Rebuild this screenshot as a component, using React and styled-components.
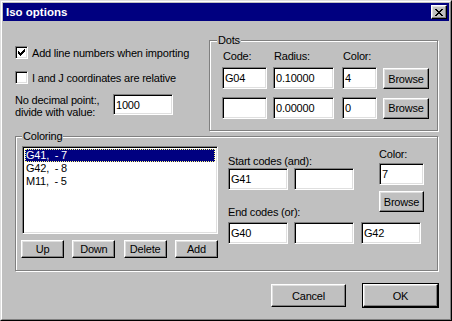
import styled, { createGlobalStyle } from 'styled-components'

const GlobalStyle = createGlobalStyle`
  html, body {
    margin: 0;
    padding: 0;
    background: #c0c0c0;
  }
  body {
    font-family: "Liberation Sans", Arial, sans-serif;
    font-size: 11px;
    letter-spacing: -0.2px;
    color: #000;
  }
`

const Window = styled.div`
  width: 452px;
  height: 321px;
  box-sizing: border-box;
  border: 1px solid;
  border-color: #dfdfdf #000 #000 #dfdfdf;
  background: #c0c0c0;
`

const Frame = styled.div`
  height: 100%;
  box-sizing: border-box;
  border: 1px solid;
  border-color: #fff #808080 #808080 #fff;
  padding: 1px;
  display: flex;
  flex-direction: column;
`

const TitleBar = styled.div`
  height: 18px;
  flex: none;
  background: #000080;
  color: #fff;
  display: flex;
  align-items: center;
  justify-content: space-between;
  padding: 0 2px 0 3px;
  font-weight: bold;
  font-size: 11.5px;
  letter-spacing: 0;
`

const CloseButton = styled.div`
  width: 16px;
  height: 14px;
  box-sizing: border-box;
  background: #c0c0c0;
  border: 1px solid;
  border-color: #fff #000 #000 #fff;
  box-shadow: inset -1px -1px 0 #808080, inset 1px 1px 0 #dfdfdf;
  display: flex;
  align-items: center;
  justify-content: center;
`

const Body = styled.div`
  padding: 13px 11px 0 12px;
  display: flex;
  flex-direction: column;
`

const TopSection = styled.div`
  display: grid;
  grid-template-columns: 194px 229px;
`

const LeftColumn = styled.div`
  padding-top: 12px;
  display: flex;
  flex-direction: column;
`

const CheckRow = styled.label`
  display: flex;
  align-items: center;
  gap: 4px;
  height: 13px;
  margin-top: ${({ $gap }) => $gap || 0}px;
  white-space: nowrap;
`

const CheckBox = styled.span`
  width: 13px;
  height: 13px;
  flex: none;
  box-sizing: border-box;
  background: #fff;
  border: 1px solid;
  border-color: #808080 #fff #fff #808080;
  box-shadow: inset 1px 1px 0 #000, inset -1px -1px 0 #dfdfdf;
  display: flex;
  align-items: center;
  justify-content: center;
`

const DecimalRow = styled.div`
  margin-top: 10px;
  display: flex;
  align-items: flex-start;
`

const DecimalText = styled.div`
  width: 98px;
  line-height: 12px;
  padding-top: 0px;
`

const Field = styled.input`
  width: ${({ $w }) => $w}px;
  height: ${({ $h }) => $h || 22}px;
  box-sizing: border-box;
  margin: 0;
  padding: 0 2px;
  background: #fff;
  border: 1px solid;
  border-color: #808080 #fff #fff #808080;
  box-shadow: inset 1px 1px 0 #000, inset -1px -1px 0 #dfdfdf;
  font-family: "Liberation Sans", Arial, sans-serif;
  font-size: 11px;
  letter-spacing: -0.2px;
  color: #000;
  outline: none;
  align-self: ${({ $align }) => $align || 'start'};
  justify-self: ${({ $justify }) => $justify || 'start'};
`

const Button = styled.button`
  width: ${({ $w }) => $w}px;
  height: ${({ $h }) => $h}px;
  box-sizing: border-box;
  margin: 0;
  padding: 0;
  background: #c0c0c0;
  border: 1px solid;
  border-color: #fff #000 #000 #fff;
  box-shadow: inset -1px -1px 0 #808080, inset 1px 1px 0 #dfdfdf;
  font-family: "Liberation Sans", Arial, sans-serif;
  font-size: 11px;
  letter-spacing: -0.2px;
  color: #000;
  align-self: center;
  justify-self: start;
`

const DefaultButton = styled(Button)`
  outline: 1px solid #000;
  outline-offset: 0;
  border-color: #fff #000 #000 #fff;
  box-shadow: inset -1px -1px 0 #808080, inset 1px 1px 0 #dfdfdf;
`

const GroupBox = styled.fieldset`
  margin: ${({ $top }) => $top || 0}px 0 0 0;
  min-width: 0;
  border: 1px solid #808080;
  box-shadow: 1px 1px 0 #fff, inset 1px 1px 0 #fff;
  padding: ${({ $pad }) => $pad};
`

const Legend = styled.legend`
  padding: 0 1px;
  line-height: 13px;
  background: #c0c0c0;
`

const DotsGrid = styled.div`
  margin-left: 5px;
  display: grid;
  grid-template-columns: 51px 69px 41px 46px;
  grid-template-rows: 17px 30px 22px;
`

const ColLabel = styled.span`
  line-height: 13px;
  padding-left: 1px;
`

const ColoringGrid = styled.div`
  display: grid;
  grid-template-columns: 196px 1fr;
  column-gap: 10px;
`

const ListColumn = styled.div`
  display: flex;
  flex-direction: column;
`

const ListBox = styled.div`
  height: 88px;
  box-sizing: border-box;
  background: #fff;
  border: 1px solid;
  border-color: #808080 #fff #fff #808080;
  box-shadow: inset 1px 1px 0 #000, inset -1px -1px 0 #dfdfdf;
  padding: 2px 2px 0 2px;
`

const ListItem = styled.div`
  height: 13px;
  line-height: 13px;
  padding-left: 1px;
  white-space: pre;
  background: ${({ $selected }) => ($selected ? '#000080' : 'transparent')};
  color: ${({ $selected }) => ($selected ? '#fff' : '#000')};
  outline: ${({ $selected }) => ($selected ? '1px dotted #ffff80' : 'none')};
  outline-offset: -1px;
`

const ListButtons = styled.div`
  margin: 6px 0 0 -1px;
  display: flex;
  justify-content: space-between;
`

const CodesArea = styled.div`
  display: grid;
  grid-template-columns: 60px 61px 63px;
  column-gap: 6px;
  grid-template-rows: 22px 23px 31px 22px;
`

const RowLabel = styled.span`
  grid-column: 1 / 3;
  align-self: end;
  line-height: 13px;
  margin-bottom: ${({ $mb }) => $mb || 0}px;
`

const ColorBlock = styled.div`
  grid-column: 3;
  grid-row: 1 / 4;
  justify-self: end;
  width: 45px;
  display: flex;
  flex-direction: column;
  padding-top: 2px;
`

const ColorLabel = styled.span`
  line-height: 13px;
  margin-bottom: 2px;
`

const ButtonBar = styled.div`
  margin-top: 13px;
  display: flex;
  justify-content: flex-end;
  gap: 17px;
`

const CloseGlyph = () => (
  <svg width="8" height="7" viewBox="0 0 8 7" shapeRendering="crispEdges">
    <path
      d="M0 0h2v1H0zM6 0h2v1H6zM1 1h2v1H1zM5 1h2v1H5zM2 2h4v1H2zM3 3h2v1H3zM2 4h4v1H2zM1 5h2v1H1zM5 5h2v1H5zM0 6h2v1H0zM6 6h2v1H6z"
      fill="#000"
    />
  </svg>
)

const CheckMark = () => (
  <svg width="7" height="7" viewBox="0 0 7 7" shapeRendering="crispEdges">
    <path
      d="M6 0h1v1H6zM5 1h2v1H5zM0 2h1v1H0zM4 2h3v1H4zM0 3h2v1H0zM3 3h3v1H3zM0 4h5v1H0zM1 5h3v1H1zM2 6h1v1H2z"
      fill="#000"
    />
  </svg>
)

const items = ['G41,  - 7', 'G42,  - 8', 'M11,  - 5']

const App = () => {
  return (
    <Window>
      <GlobalStyle />
      <Frame>
        <TitleBar>
          <span>Iso options</span>
          <CloseButton>
            <CloseGlyph />
          </CloseButton>
        </TitleBar>
        <Body>
          <TopSection>
            <LeftColumn>
              <CheckRow>
                <CheckBox>
                  <CheckMark />
                </CheckBox>
                Add line numbers when importing
              </CheckRow>
              <CheckRow $gap={12}>
                <CheckBox />
                I and J coordinates are relative
              </CheckRow>
              <DecimalRow>
                <DecimalText>
                  No decimal point:,
                  <br />
                  divide with value:
                </DecimalText>
                <Field $w={60} $h={21} readOnly value="1000" />
              </DecimalRow>
            </LeftColumn>
            <GroupBox $pad="3px 8px 11px 7px">
              <Legend>Dots</Legend>
              <DotsGrid>
                <ColLabel>Code:</ColLabel>
                <ColLabel>Radius:</ColLabel>
                <ColLabel>Color:</ColLabel>
                <span />
                <Field $w={45} readOnly value="G04" />
                <Field $w={61} readOnly value="0.10000" />
                <Field $w={35} readOnly value="4" />
                <Button $w={46} $h={21} style={{ alignSelf: 'start', marginTop: 1 }}>Browse</Button>
                <Field $w={45} readOnly value="" />
                <Field $w={61} readOnly value="0.00000" />
                <Field $w={35} readOnly value="0" />
                <Button $w={46} $h={21}>Browse</Button>
              </DotsGrid>
            </GroupBox>
          </TopSection>

          <GroupBox $top={-1} $pad="3px 13px 12px 6px">
            <Legend>Coloring</Legend>
            <ColoringGrid>
              <ListColumn>
                <ListBox>
                  {items.map((item, i) => (
                    <ListItem key={item} $selected={i === 0}>
                      {item}
                    </ListItem>
                  ))}
                </ListBox>
                <ListButtons>
                  <Button $w={43} $h={18}>Up</Button>
                  <Button $w={43} $h={18}>Down</Button>
                  <Button $w={43} $h={18}>Delete</Button>
                  <Button $w={43} $h={18}>Add</Button>
                </ListButtons>
              </ListColumn>
              <CodesArea>
                <RowLabel>Start codes (and):</RowLabel>
                <ColorBlock>
                  <ColorLabel>Color:</ColorLabel>
                  <Field $w={45} readOnly value="7" />
                  <Button $w={45} $h={21} style={{ marginTop: 6 }}>Browse</Button>
                </ColorBlock>
                <Field $w={60} readOnly value="G41" />
                <Field $w={60} readOnly value="" />
                <RowLabel $mb={3}>End codes (or):</RowLabel>
                <Field $w={60} readOnly value="G40" />
                <Field $w={60} readOnly value="" />
                <Field $w={60} readOnly value="G42" />
              </CodesArea>
            </ColoringGrid>
          </GroupBox>

          <ButtonBar>
            <Button $w={75} $h={23}>Cancel</Button>
            <DefaultButton $w={75} $h={23}>OK</DefaultButton>
          </ButtonBar>
        </Body>
      </Frame>
    </Window>
  )
}

export default App
